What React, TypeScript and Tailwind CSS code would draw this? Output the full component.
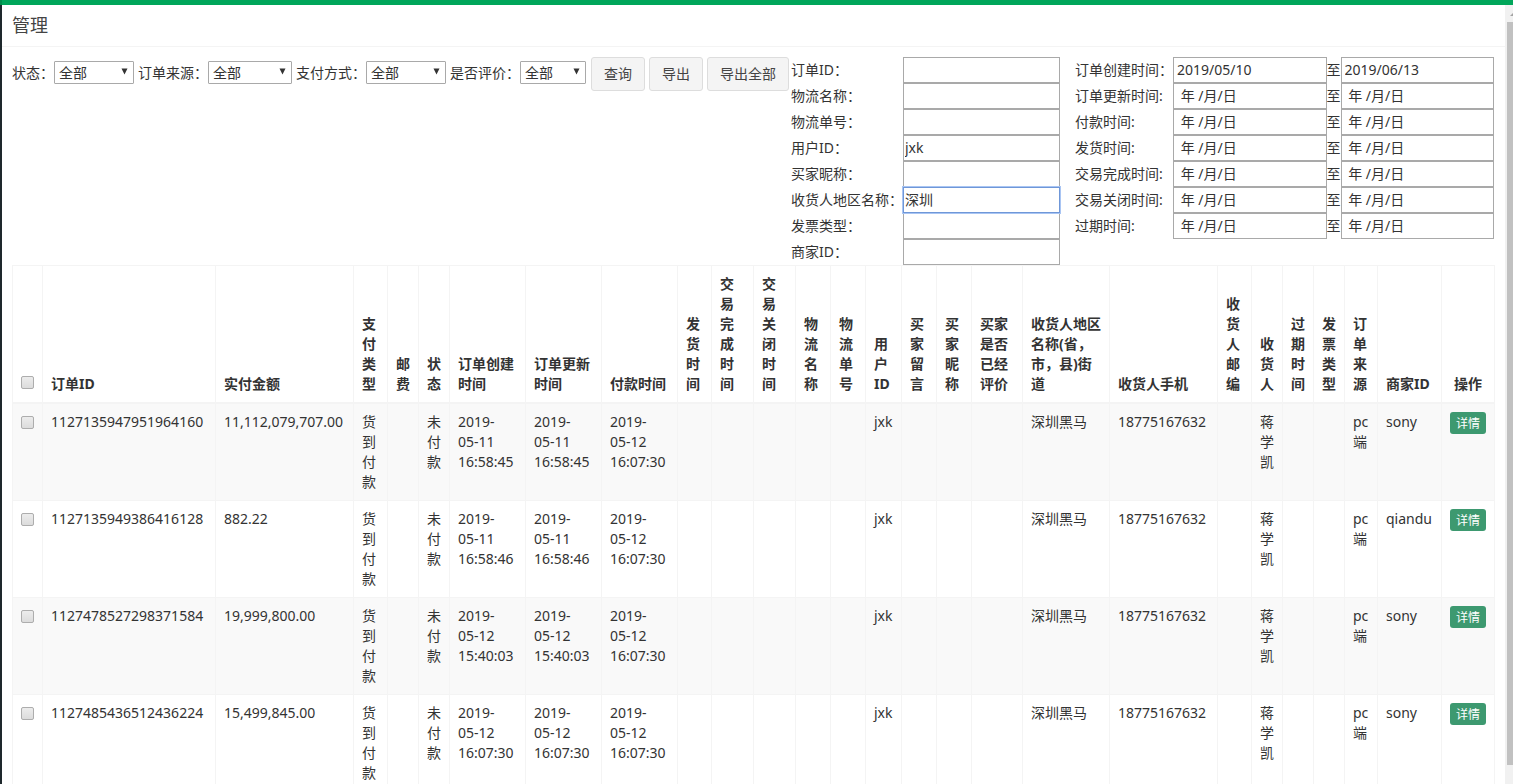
import { Fragment } from "react";

const selects = [
  { id: "status", label: "状态：", width: "w-[80px]" },
  { id: "source", label: "订单来源：", width: "w-[84px]" },
  { id: "payment", label: "支付方式：", width: "w-[80px]" },
  { id: "rated", label: "是否评价：", width: "w-[66px]" },
];

const textFields = [
  { id: "orderId", label: "订单ID：", value: "" },
  { id: "shippingName", label: "物流名称：", value: "" },
  { id: "shippingCode", label: "物流单号：", value: "" },
  { id: "userId", label: "用户ID：", value: "jxk" },
  { id: "buyerNick", label: "买家昵称：", value: "" },
  { id: "receiverArea", label: "收货人地区名称：", value: "深圳", active: true },
  { id: "invoiceType", label: "发票类型：", value: "" },
  { id: "sellerId", label: "商家ID：", value: "" },
];

const dateFields = [
  { id: "created", label: "订单创建时间：", from: "2019/05/10", to: "2019/06/13" },
  { id: "updated", label: "订单更新时间:", from: "", to: "" },
  { id: "paid", label: "付款时间:", from: "", to: "" },
  { id: "shipped", label: "发货时间:", from: "", to: "" },
  { id: "finished", label: "交易完成时间:", from: "", to: "" },
  { id: "closed", label: "交易关闭时间:", from: "", to: "" },
  { id: "expired", label: "过期时间:", from: "", to: "" },
];

const columns = [
  { title: "订单ID", width: "w-[173px]" },
  { title: "实付金额", width: "w-[138px]" },
  { title: "支付类型", width: "w-[34px]" },
  { title: "邮费", width: "w-[31px]" },
  { title: "状态", width: "w-[31px]" },
  { title: "订单创建\n时间", width: "w-[76px]" },
  { title: "订单更新\n时间", width: "w-[76px]" },
  { title: "付款时间", width: "w-[76px]" },
  { title: "发货时间", width: "w-[34px]" },
  { title: "交易完成时间", width: "w-[42px]" },
  { title: "交易关闭时间", width: "w-[42px]" },
  { title: "物流名称", width: "w-[35px]" },
  { title: "物流单号", width: "w-[35px]" },
  { title: "用户ID", width: "w-[36px]" },
  { title: "买家留言", width: "w-[35px]" },
  { title: "买家昵称", width: "w-[35px]" },
  { title: "买家\n是否\n已经\n评价", width: "w-[51px]" },
  { title: "收货人地区\n名称(省，\n市，县)街\n道", width: "w-[87px]" },
  { title: "收货人手机", width: "w-[108px]" },
  { title: "收货人邮编", width: "w-[34px]" },
  { title: "收货人", width: "w-[31px]" },
  { title: "过期时间", width: "w-[31px]" },
  { title: "发票类型", width: "w-[31px]" },
  { title: "订单来源", width: "w-[33px]" },
  { title: "商家ID", width: "w-[64px]" },
];

const orders = [
  {
    id: "1127135947951964160",
    amount: "11,112,079,707.00",
    created: "2019-\n05-11\n16:58:45",
    updated: "2019-\n05-11\n16:58:45",
    seller: "sony",
  },
  {
    id: "1127135949386416128",
    amount: "882.22",
    created: "2019-\n05-11\n16:58:46",
    updated: "2019-\n05-11\n16:58:46",
    seller: "qiandu",
  },
  {
    id: "1127478527298371584",
    amount: "19,999,800.00",
    created: "2019-\n05-12\n15:40:03",
    updated: "2019-\n05-12\n15:40:03",
    seller: "sony",
  },
  {
    id: "1127485436512436224",
    amount: "15,499,845.00",
    created: "2019-\n05-12\n16:07:30",
    updated: "2019-\n05-12\n16:07:30",
    seller: "sony",
  },
];

function orderCells(o: (typeof orders)[number]) {
  return [
    o.id, o.amount, "货到付款", "", "未付款", o.created, o.updated, "2019-\n05-12\n16:07:30",
    "", "", "", "", "", "jxk", "", "", "", "深圳黑马", "18775167632", "", "蒋学凯", "", "",
    "pc\n端", o.seller,
  ];
}

const inputClass =
  "h-[26px] w-full min-w-0 border bg-white pb-0.5 outline-none placeholder:text-[#333] placeholder:opacity-100";
const checkClass =
  "block size-[13px] appearance-none rounded-[2px] border border-[#adadad] bg-linear-to-b from-[#ececec] to-[#dcdcdc] checked:bg-[#3d9970]";
const cellClass = "border border-[#f4f4f4] p-2 whitespace-pre-line";

function Filters() {
  return (
    <form className="flex items-start" onSubmit={(e) => e.preventDefault()}>
      <div className="flex w-[779px] shrink-0 items-start justify-between">
        <div className="flex gap-1 pt-1">
          {selects.map((s) => (
            <div key={s.id} className="flex h-[23px] shrink-0 items-center">
              <label htmlFor={s.id}>{s.label}</label>
              <div className="relative">
                <select
                  id={s.id}
                  className={`block h-[23px] appearance-none rounded-[1px] border border-[#a9a9a9] bg-white pl-1 outline-none ${s.width}`}
                >
                  <option>全部</option>
                </select>
                <svg
                  aria-hidden="true"
                  viewBox="0 0 7 7"
                  className="pointer-events-none absolute top-[7px] right-1.5 size-[7px] fill-[#333]"
                >
                  <path d="M0.5 0.5h6L3.5 6.5z" />
                </svg>
              </div>
            </div>
          ))}
        </div>
        <div className="flex gap-1 pr-0.5">
          {["查询", "导出", "导出全部"].map((text) => (
            <button
              key={text}
              type="button"
              className="h-[34px] shrink-0 rounded-[3px] border border-[#ddd] bg-[#f4f4f4] px-3 text-[#444]"
            >
              {text}
            </button>
          ))}
        </div>
      </div>
      <div className="grid w-[269px] shrink-0 grid-cols-[112px_1fr] items-center">
        {textFields.map((f) => (
          <Fragment key={f.id}>
            <label htmlFor={f.id} className="whitespace-nowrap">
              {f.label}
            </label>
            <input
              id={f.id}
              type="text"
              defaultValue={f.value}
              className={`${inputClass} px-px ${
                f.active ? "relative border-[#6f97d8] ring-1 ring-[#a9c5f3]" : "border-[#a9a9a9]"
              }`}
            />
          </Fragment>
        ))}
      </div>
      <div className="grid min-w-0 flex-1 grid-cols-[98px_1fr_14px_1fr] items-center pr-px pl-[15px]">
        {dateFields.map((f) => (
          <Fragment key={f.id}>
            <label htmlFor={`${f.id}From`} className="whitespace-nowrap">
              {f.label}
            </label>
            <input
              id={`${f.id}From`}
              type="text"
              defaultValue={f.from}
              placeholder={"\u00a0年\u00a0/月/日"}
              className={`${inputClass} border-[#a9a9a9] px-[3px]`}
            />
            <label htmlFor={`${f.id}To`}>至</label>
            <input
              id={`${f.id}To`}
              type="text"
              defaultValue={f.to}
              placeholder={"\u00a0年\u00a0/月/日"}
              className={`${inputClass} border-[#a9a9a9] px-[3px]`}
            />
          </Fragment>
        ))}
      </div>
    </form>
  );
}

function OrderTable() {
  return (
    <table className="w-full table-fixed border-collapse border border-[#f4f4f4]">
      <colgroup>
        <col className="w-[30px]" />
        {columns.map((c, i) => (
          <col key={i} className={c.width} />
        ))}
        <col className="w-[53px]" />
      </colgroup>
      <thead>
        <tr className="text-left align-bottom font-bold">
          <th className={`${cellClass} border-b-2`}>
            <input type="checkbox" aria-label="全选" className={`${checkClass} mb-[5px]`} />
          </th>
          {columns.map((c, i) => (
            <th key={i} className={`${cellClass} border-b-2`}>
              {c.title}
            </th>
          ))}
          <th className={`${cellClass} border-b-2 text-center`}>操作</th>
        </tr>
      </thead>
      <tbody>
        {orders.map((o) => (
          <tr key={o.id} className="align-top odd:bg-[#f9f9f9]">
            <td className={cellClass}>
              <input type="checkbox" aria-label={o.id} className={`${checkClass} mt-1`} />
            </td>
            {orderCells(o).map((text, i) => (
              <td key={i} className={cellClass}>
                {text}
              </td>
            ))}
            <td className={cellClass}>
              <button
                type="button"
                className="block h-[22px] w-full rounded-[3px] bg-[#3d9970] pt-0.5 text-center text-xs whitespace-nowrap text-white"
              >
                详情
              </button>
            </td>
          </tr>
        ))}
      </tbody>
    </table>
  );
}

export default function App() {
  return (
    <div className="flex h-screen flex-col overflow-hidden bg-white font-['Noto_Sans','Noto_Sans_CJK_SC',sans-serif] text-[14px] leading-5 text-[#333]">
      <div className="h-[5px] shrink-0 border-l-2 border-[#008d4c] bg-[#00a65a]" />
      <div className="flex min-h-0 flex-1">
        <div className="w-[2px] shrink-0 bg-[#1e282c]" />
        <main className="min-w-0 flex-1 overflow-hidden">
          <header className="border-b border-[#f4f4f4] p-[10px]">
            <h1 className="text-[18px] leading-[21px] text-[#444]">管理</h1>
          </header>
          <div className="p-[10px]">
            <Filters />
            <OrderTable />
          </div>
        </main>
        <div className="flex w-2 shrink-0 flex-col bg-[#f1f1f1] pb-[19px] pl-0.5">
          <svg aria-hidden="true" viewBox="0 0 6 17" className="h-[17px] w-1.5 shrink-0 fill-[#a3a3a3]">
            <path d="M6 8v3H3z" />
          </svg>
          <div className="flex-1 bg-[#c1c1c1]" />
        </div>
      </div>
    </div>
  );
}
